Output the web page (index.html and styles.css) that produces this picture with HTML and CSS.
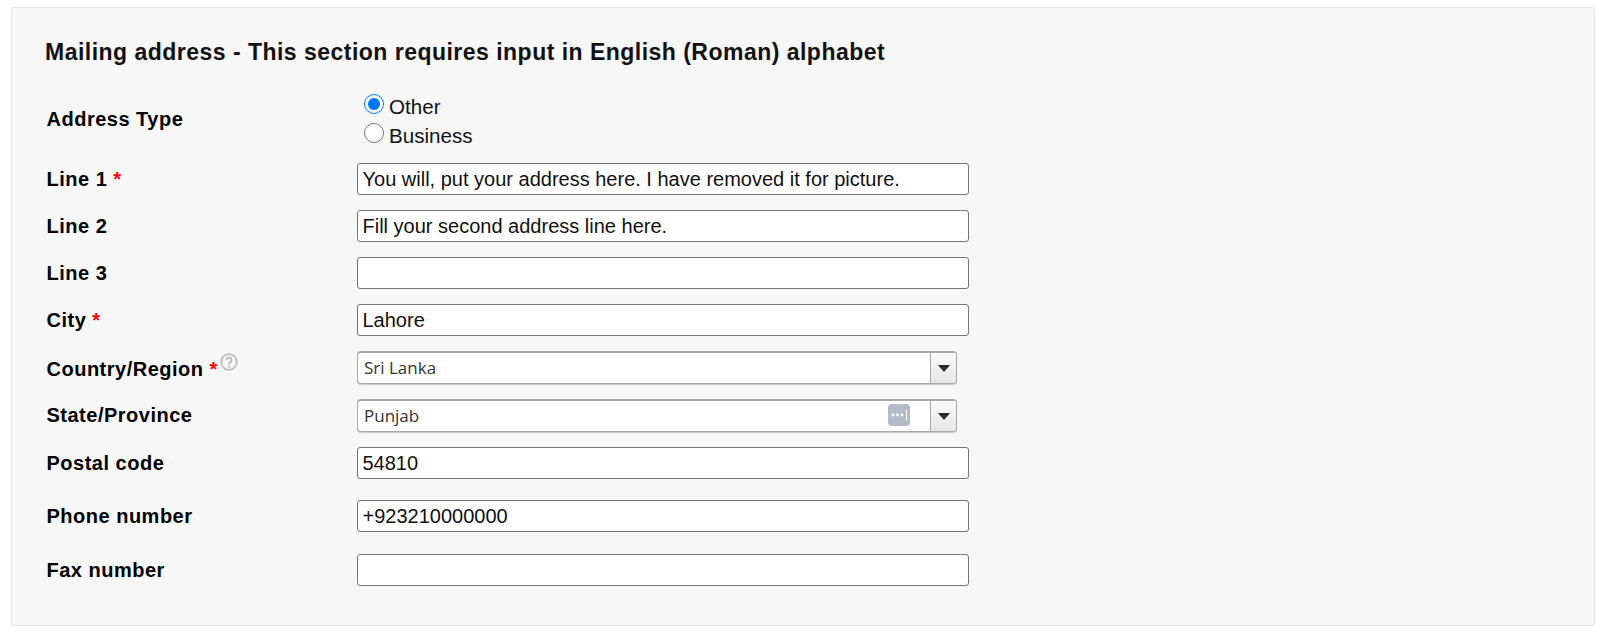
FILE: index.html
```html
<!DOCTYPE html>
<html lang="en">
<head>
<meta charset="utf-8">
<title>Mailing address</title>
<link rel="stylesheet" href="styles.css">
</head>
<body>
<section class="panel">
  <h2 class="title">Mailing address - This section requires input in English (Roman) alphabet</h2>
  <div class="row row-type">
    <div class="label label-type">Address Type</div>
    <div class="radios">
      <label class="radio"><input type="radio" name="t" checked>Other</label>
      <label class="radio"><input type="radio" name="t">Business</label>
    </div>
  </div>
  <div class="row"><div class="label">Line 1 <span class="req">*</span></div><input class="field" type="text" value="You will, put your address here. I have removed it for picture."></div>
  <div class="row"><div class="label">Line 2</div><input class="field" type="text" value="Fill your second address line here."></div>
  <div class="row"><div class="label">Line 3</div><input class="field" type="text"></div>
  <div class="row"><div class="label">City <span class="req">*</span></div><input class="field" type="text" value="Lahore"></div>
  <div class="row row-select">
    <div class="label label-country">Country/Region <span class="req">*</span><svg class="help" width="18" height="18" viewBox="0 0 18 18"><circle cx="9" cy="9" r="7.8" fill="none" stroke="#bdbdbd" stroke-width="1.8"/><path d="M6.4 7.2a2.6 2.6 0 1 1 4 2.1c-.9.6-1.4 1-1.4 2.1" fill="none" stroke="#b5b5b5" stroke-width="1.7"/><circle cx="9" cy="13.6" r="1.1" fill="#b5b5b5"/></svg></div>
    <div class="combo"><div class="combo-text">Sri Lanka</div><div class="combo-btn"><span class="caret"></span></div></div>
  </div>
  <div class="row row-select">
    <div class="label">State/Province</div>
    <div class="combo"><div class="combo-text">Punjab<svg class="dots" width="22" height="22" viewBox="0 0 22 22"><rect width="22" height="22" rx="4" fill="#b3bac8"/><circle cx="5" cy="11" r="1.4" fill="#fff"/><circle cx="9.5" cy="11" r="1.4" fill="#fff"/><circle cx="14" cy="11" r="1.4" fill="#fff"/><rect x="18" y="5.5" width="1" height="11" fill="#fff"/></svg></div><div class="combo-btn"><span class="caret"></span></div></div>
  </div>
  <div class="row row-postal"><div class="label">Postal code</div><input class="field" type="text" value="54810"></div>
  <div class="row row-phone"><div class="label">Phone number</div><input class="field" type="text" value="+923210000000"></div>
  <div class="row"><div class="label">Fax number</div><input class="field" type="text"></div>
</section>
</body>
</html>
```

FILE: styles.css
```css
* { box-sizing: border-box; }
html, body { background: #fff; }
body {
  margin: 0;
  padding: 7px 10px 9px 11px;
  font-family: "Liberation Sans", Arial, sans-serif;
  color: #000;
}
.panel {
  height: 619px;
  background: #f7f7f7;
  border: 1px solid #e3e3e3;
  border-radius: 3px;
  padding: 31px 33px 0 33px;
}
.title {
  margin: 0 0 25px;
  font-size: 23px;
  letter-spacing: .48px;
  line-height: 27px;
  font-weight: 700;
  color: #111;
  white-space: nowrap;
}
.row {
  display: grid;
  grid-template-columns: 312px 612px;
  align-items: center;
  height: 32px;
  margin-bottom: 15px;
}
.row-type { height: 58px; margin-bottom: 14px; }
.row-select { margin-bottom: 15px; height: 33px; }
.row-postal { margin-bottom: 21px; }
.row-phone { margin-bottom: 22px; }
.label {
  font-size: 20px;
  font-weight: 700;
  letter-spacing: .5px;
  padding-left: 1.5px;
  white-space: nowrap;
}
.label-type { padding-bottom: 3px; }
.label-country { padding-bottom: 2px; }
.req { color: #f00; font-weight: 700; letter-spacing: 0; }
.help { margin-left: 3px; vertical-align: 5px; }
.radios { display: flex; flex-direction: column; margin-left: 7px; padding-top: 1px; }
.radio {
  display: flex;
  align-items: center;
  height: 29px;
  font-size: 20.6px;
  color: #111;
}
.radio input {
  width: 20px;
  height: 20px;
  margin: 0 5px 5px 0;
  accent-color: #0075ff;
}
.field {
  width: 612px;
  height: 32px;
  padding: 0 4.5px;
  border: 1px solid #767676;
  border-radius: 3px;
  background: #fff;
  font-family: "Liberation Sans", Arial, sans-serif;
  font-size: 20px;
  color: #111;
  outline: none;
}
.combo {
  display: flex;
  width: 600px;
  height: 33px;
  border: 1px solid #aaa;
  border-top-width: 2px;
  border-radius: 4px;
  box-shadow: 0 1px 1px rgba(0,0,0,.18);
  background: #fff;
  overflow: hidden;
}
.combo-text {
  flex: 1;
  display: flex;
  align-items: center;
  justify-content: space-between;
  padding: 0 20px 2px 6px;
  font-family: "Open Sans", sans-serif;
  font-size: 17px;
  color: #333;
}
.combo-btn {
  width: 26px;
  display: flex;
  align-items: center;
  justify-content: center;
  border-left: 1px solid #a8a8a8;
  background: linear-gradient(#fafafa, #e6e6e6);
}
.caret {
  width: 0;
  height: 0;
  border-left: 6.5px solid transparent;
  border-right: 6.5px solid transparent;
  border-top: 7px solid #2b2b2b;
}
```
